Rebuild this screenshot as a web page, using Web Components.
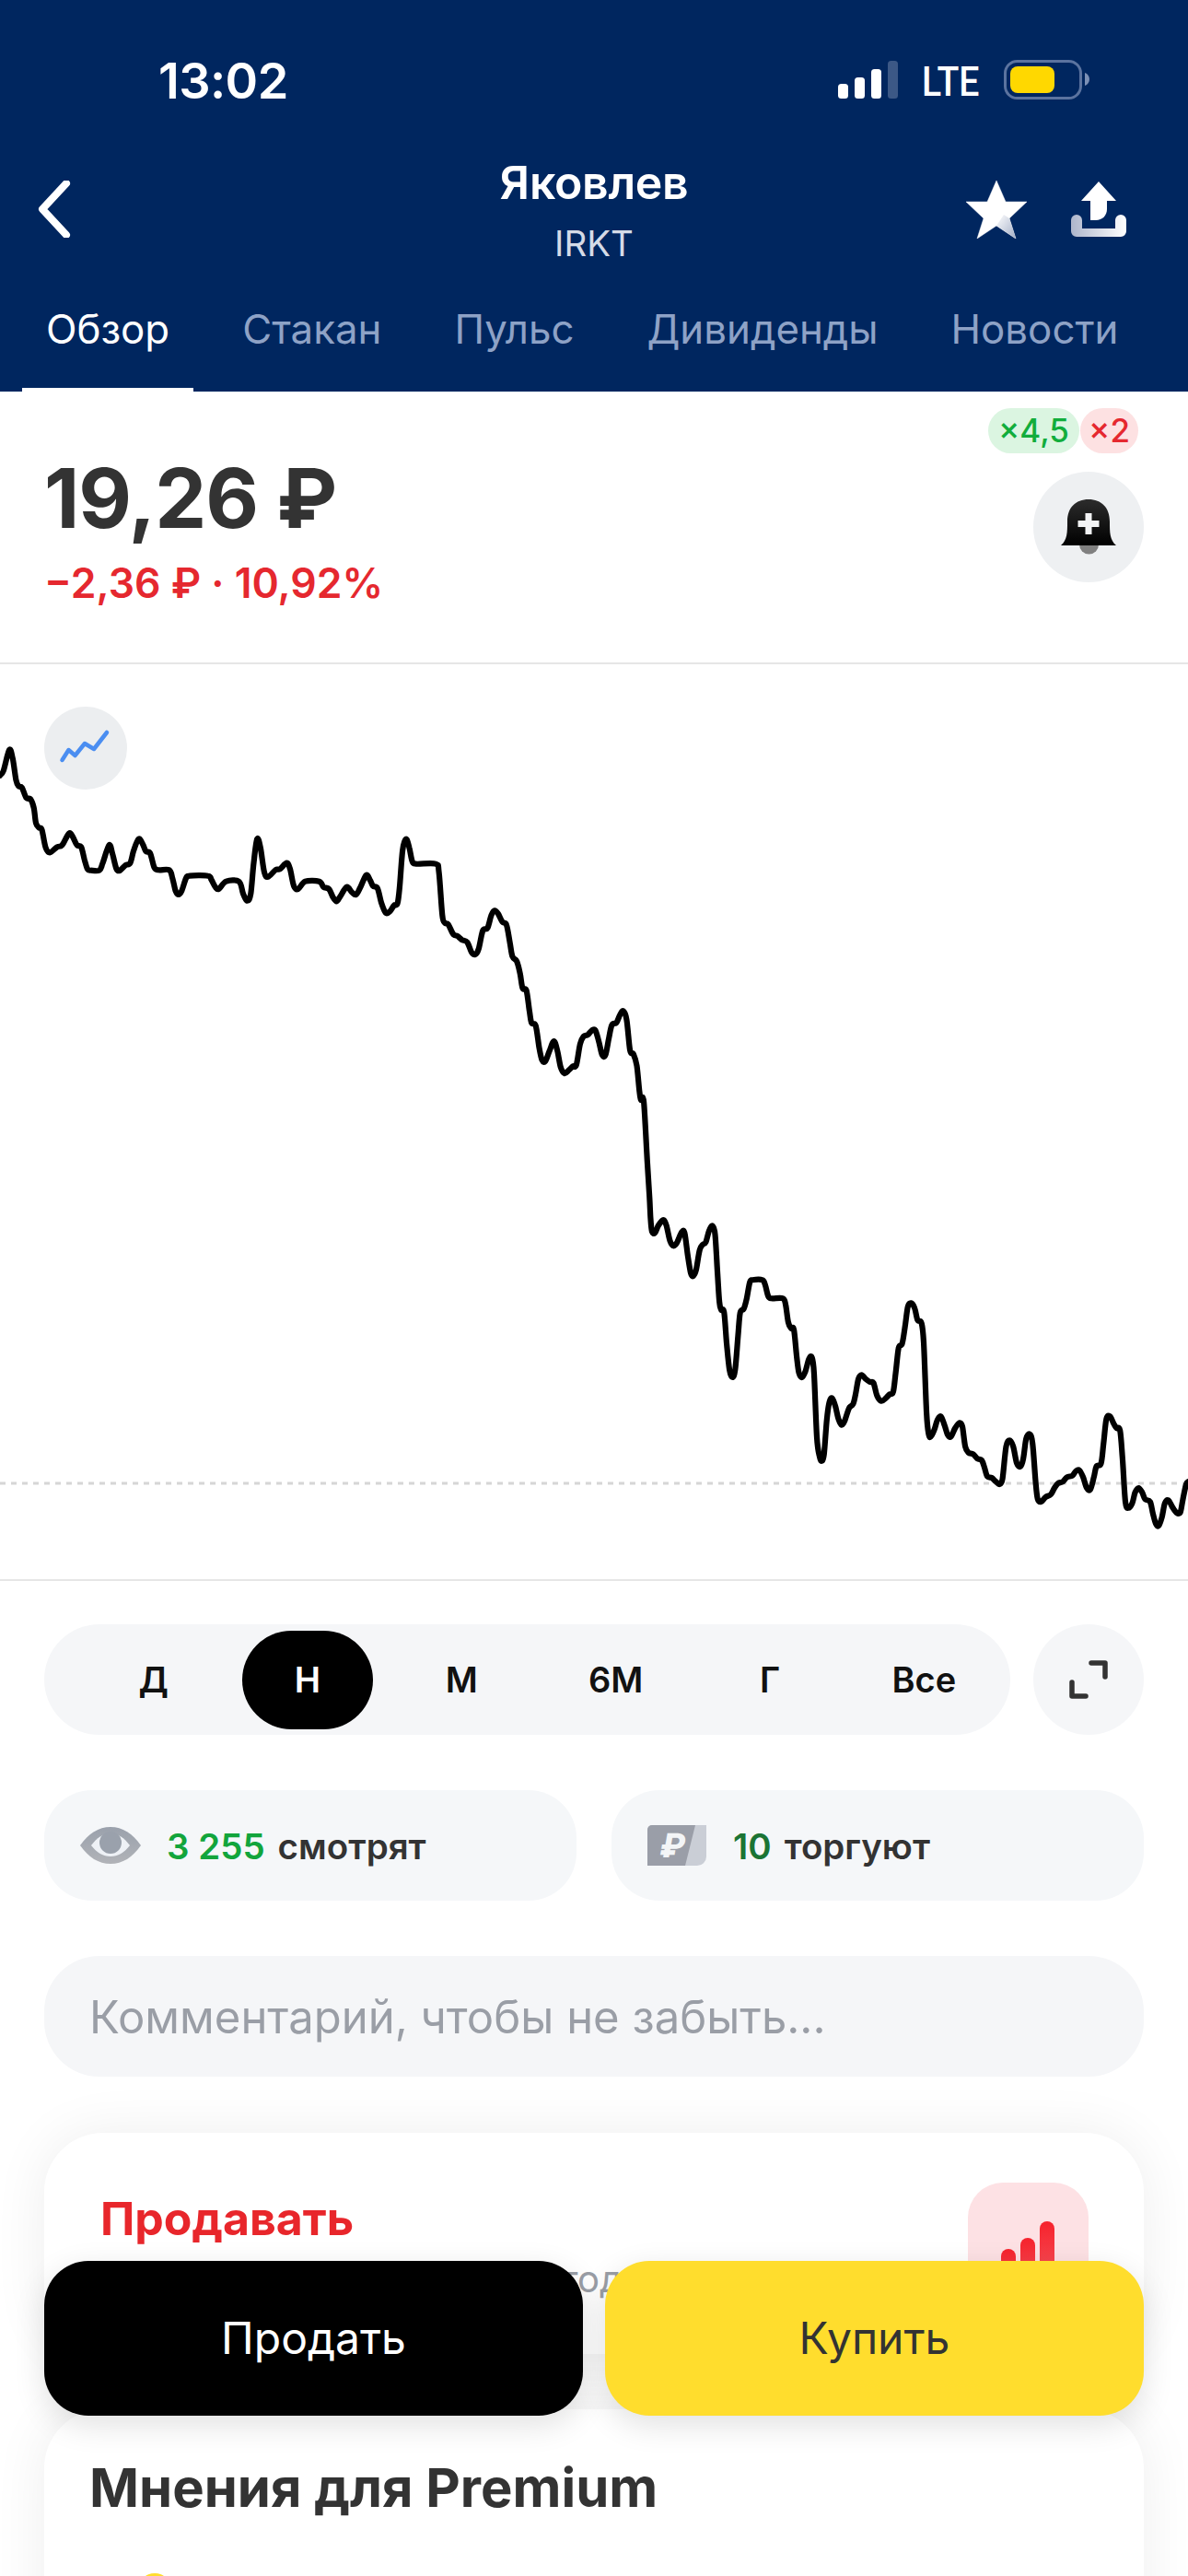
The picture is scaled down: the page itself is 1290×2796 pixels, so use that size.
<!DOCTYPE html>
<html lang="ru">
<head>
<meta charset="utf-8">
<title>Яковлев</title>
<style>
  html, body { margin: 0; padding: 0; background: #fff; }
  body { width: 1290px; height: 2796px; overflow: hidden; position: relative; font-family: Inter, "Noto Sans", sans-serif; color: #333; }
</style>
</head>
<body>
<stock-header title="Яковлев" ticker="IRKT"></stock-header>
<price-block></price-block>
<price-chart></price-chart>
<range-bar></range-bar>
<div style="display:flex;gap:38px;padding:60px 48px 0">
  <stat-pill number="3 255" label="смотрят" color="#12a53c" icon="eye"></stat-pill>
  <stat-pill number="10" label="торгуют" color="#1b7434" icon="rub"></stat-pill>
</div>
<comment-field>Комментарий, чтобы не забыть...</comment-field>
<advice-card></advice-card>
<opinions-card></opinions-card>
<trade-buttons></trade-buttons>

<script>
class StockHeader extends HTMLElement {
  constructor() {
    super();
    this.shadowDOM = this.attachShadow({ mode: 'open' });
  }

  connectedCallback() {
    this.shadowDOM.innerHTML = `
    <style>
      :host { display: block; height: 425px; background: #00265f; color: #fff; overflow: hidden; }
      .status { display: flex; align-items: center; height: 66px; padding-top: 55px; position: relative; }
      .time { margin-left: 172px; font-size: 54px; font-weight: 600; letter-spacing: -.6px; line-height: 66px; }
      .status svg { position: absolute; left: 900px; top: 55px; }
      .lte { position: absolute; left: 1001px; top: 66px; font-family: Roboto, sans-serif; font-size: 45px; line-height: 46px; font-weight: 500; transform: scaleX(.87); transform-origin: left; }
      .nav { display: flex; justify-content: space-between; align-items: center; height: 112px; margin-top: 50px; padding: 0 67px 0 41px; }
      .names { position: absolute; left: 0; right: 0; padding-top: 5px; text-align: center; }
      .names b { display: block; font-size: 50px; font-weight: 600; line-height: 56px; letter-spacing: -.3px; }
      .names span { display: block; font-size: 38.500px; line-height: 50px; margin-top: 13px; color: #d5dbe7; }
      .actions { display: flex; gap: 48px; align-items: center; }
      .tabs { display: flex; gap: 27px; margin: 44px 0 0 24px; }
      .tabs span { padding: 0 26px; height: 100px; font-size: 43.800px; line-height: 62px; color: #8ea2c6; white-space: nowrap; box-sizing: border-box; }
      .tabs .on { color: #fff; border-bottom: 6px solid #fff; }
    </style>
    <div class="status">
      <span class="time">13:02</span>
      <svg width="300" height="60" viewBox="900 55 300 60">
        <rect x="910" y="91" width="11" height="16" rx="3.5" fill="#fff"/>
        <rect x="928" y="84" width="11" height="23" rx="3.5" fill="#fff"/>
        <rect x="946" y="75" width="11" height="32" rx="3.5" fill="#fff"/>
        <rect x="964" y="66" width="11" height="41" rx="3.5" fill="#3c5886"/>
        <rect x="1091.5" y="66.5" width="82" height="40" rx="13" fill="none" stroke="#5b739f" stroke-width="3"/>
        <rect x="1097" y="72" width="48" height="29" rx="8" fill="#ffd800"/>
        <path d="M1178 79c3 1 5 4 5 7s-2 6-5 7z" fill="#7c90b5"/>
      </svg>
      <span class="lte">LTE</span>
    </div>
    <div class="nav">
      <svg width="36" height="62" viewBox="0 0 36 62"><path d="M31 3 5 31l26 28" fill="none" stroke="#fff" stroke-width="8" stroke-linecap="round" stroke-linejoin="round"/></svg>
      <div class="names"><b>${this.getAttribute('title')}</b><span>${this.getAttribute('ticker')}</span></div>
      <div class="actions">
        <svg width="66" height="63" viewBox="0 0 66 63">
          <defs><linearGradient id="st" x1="0" y1="0" x2="1" y2="1"><stop offset="0" stop-color="#fff"/><stop offset="1" stop-color="#a2adc6"/></linearGradient></defs>
          <path d="M33 0l10 23h23L47 41l7 22-21-14-21 14 7-22L0 23h23z" fill="#fff" stroke="#fff" stroke-width=".5" stroke-linejoin="round"/>
          <path d="M33 49l21 14-7-22-6-4z" fill="url(#st)"/>
        </svg>
        <svg width="60" height="60" viewBox="0 0 60 60">
          <defs><linearGradient id="tr" x1="0" y1="0" x2="1" y2="0"><stop offset="0" stop-color="#aeb6cc"/><stop offset="1" stop-color="#fff"/></linearGradient></defs>
          <path d="M30 0 49 21H39v9c0 7-5 12-12 12h-6V21H11z" fill="#fff"/>
          <path d="M0 42a6 6 0 0 1 12 0v9h36v-9a6 6 0 0 1 12 0v12a6 6 0 0 1-6 6H6a6 6 0 0 1-6-6z" fill="url(#tr)"/>
        </svg>
      </div>
    </div>
    <div class="tabs">
      <span class="on">Обзор</span><span>Стакан</span><span>Пульс</span><span>Дивиденды</span><span>Новости</span>
    </div>`;
  }
}

class PriceBlock extends HTMLElement {
  constructor() {
    super();
    this.shadowDOM = this.attachShadow({ mode: 'open' });
    this.shadowDOM.innerHTML = `
    <style>
      :host { display: flex; justify-content: space-between; height: 294px; box-sizing: content-box; border-bottom: 2px solid #e6e6e6; }
      .left { padding: 63px 0 0 48px; }
      .price { font-size: 89px; font-weight: 700; line-height: 106px; color: #333; letter-spacing: -1px; }
      .change { font-size: 44.500px; font-weight: 600; line-height: 54px; margin-top: 12px; color: #e5282f; }
      .right { display: flex; flex-direction: column; align-items: flex-end; padding: 18px 48px 0 0; }
      .badges { display: flex; margin-right: 6px; gap: 1px; }
      .badges span { height: 49px; line-height: 49px; border-radius: 25px; font-size: 35px; font-weight: 500; text-align: center; }
      .up { width: 99px; background: #dbf5e1; color: #12ad3c; }
      .down { width: 63px; background: #fde1e2; color: #e5282f; }
      .bell { width: 120px; height: 120px; border-radius: 50%; background: #eef0f2; margin-top: 20px; display: flex; align-items: center; justify-content: center; }
    </style>
    <div class="left">
      <div class="price">19,26 ₽</div>
      <div class="change">−2,36 ₽ · 10,92%</div>
    </div>
    <div class="right">
      <div class="badges"><span class="up">×4,5</span><span class="down">×2</span></div>
      <div class="bell">
        <svg width="60" height="60" viewBox="0 0 60 60">
          <defs><linearGradient id="bl" x1="0" y1="0" x2="0" y2="1"><stop offset="0" stop-color="#2c2c2c"/><stop offset="1" stop-color="#000"/></linearGradient></defs>
          <path d="M20 49h21a10.500 10.500 0 0 1-21 0z" fill="#808080"/>
          <path d="M0 50c7-6 7-14 7-26C7 9 16 0 30 0s23 9 23 24c0 12 0 20 7 26z" fill="url(#bl)"/>
          <path d="M26.500 15h7v8h8v7h-8v8h-7v-8h-8v-7h8z" fill="#f2f3f4"/>
        </svg>
      </div>
    </div>`;
  }
}

// traced from the price line, numbers are [x, y] in the crop they were read from
const CHART_A = [[0,155],[8,140],[22,72],[30,100],[38,170],[44,190],[52,195],[62,228],[72,232],[80,260],[85,310],[92,325],[99,332],[108,390],[118,406],[135,388],[147,382],[163,344],[172,355],[182,382],[192,388],[200,430],[207,460],[215,464],[235,464],[243,440],[258,382],[266,410],[275,458],[283,465],[297,447],[308,440],[316,400],[328,362],[338,380],[345,402],[355,408],[365,455],[375,463],[400,463],[408,490],[415,530],[422,543],[430,530],[440,490],[448,482],[492,482],[500,495],[510,520],[518,524],[535,500],[565,500],[575,540],[585,563],[593,540],[600,440],[608,362],[616,390],[625,470],[634,485],[652,462],[662,460],[678,440],[686,460],[695,515],[705,525],[722,500],[755,500],[765,518],[778,525],[787,550],[796,565],[805,548],[820,518],[832,535],[842,543],[852,520],[866,480],[875,495],[882,515],[893,523],[902,570],[912,602],[922,598],[932,578],[940,572],[945,520],[952,400],[960,362],[968,390],[975,435],[985,443],[1030,443],[1038,470],[1046,610],[1052,635],[1060,640],[1072,672],[1082,678],[1092,690],[1105,698],[1115,730],[1124,738],[1132,720],[1142,660],[1153,652],[1162,610],[1170,595],[1178,605],[1188,632],[1198,642],[1206,700],[1212,745],[1222,760],[1230,800],[1236,848],[1245,855],[1252,920],[1257,960],[1267,970],[1275,1040],[1282,1082],[1290,1085],[1300,1050],[1310,1020],[1318,1050],[1326,1105],[1335,1125],[1345,1115],[1355,1102],[1363,1098],[1372,1030],[1380,1005],[1390,1000],[1400,985],[1408,985],[1416,1020],[1424,1065],[1432,1065],[1440,1010],[1447,968],[1458,960],[1466,935],[1474,922],[1482,950],[1490,1050],[1498,1062],[1506,1100],[1512,1180]];
const CHART_B = [[41,-318],[49,-312],[59,-111],[65,0],[68,70],[72,110],[80,115],[90,90],[103,72],[112,90],[122,140],[132,157],[142,145],[155,112],[163,115],[172,190],[180,245],[187,255],[195,235],[205,170],[214,152],[222,145],[232,105],[241,92],[248,120],[255,250],[260,340],[265,365],[273,372],[280,470],[288,560],[296,585],[304,560],[312,450],[318,375],[328,362],[336,330],[345,275],[353,268],[380,268],[388,285],[396,320],[405,328],[437,328],[445,350],[452,405],[460,425],[468,430],[476,520],[482,570],[490,585],[500,565],[510,525],[518,520],[524,570],[532,780],[540,845],[546,857],[552,835],[560,720],[567,665],[575,653],[584,680],[592,720],[601,740],[610,725],[622,685],[633,672],[640,640],[648,590],[657,577],[668,590],[680,600],[690,603],[700,645],[712,662],[725,652],[735,640],[745,632],[752,570],[760,490],[770,475],[778,420],[786,355],[795,343],[805,360],[813,398],[824,408],[830,470],[838,700],[844,770],[850,778],[860,755],[868,725],[878,712],[888,740],[897,772],[906,778],[918,750],[930,733],[938,745],[946,810],[955,830],[968,835],[980,850],[992,855],[1000,880],[1008,908],[1020,912],[1032,925],[1042,933],[1050,915],[1060,810],[1070,790],[1080,810],[1090,865],[1100,875],[1108,850],[1116,785],[1126,770],[1134,800],[1142,920],[1148,980],[1158,990],[1170,975],[1185,966],[1195,945],[1205,930],[1218,925],[1230,910],[1245,905],[1255,890],[1265,888],[1275,910],[1285,945],[1295,950],[1305,910],[1312,875],[1325,865],[1332,800],[1340,720],[1350,712],[1360,735],[1368,750],[1378,758],[1385,850],[1393,990],[1402,1010],[1412,995],[1420,960],[1430,945],[1440,960],[1448,982],[1462,990],[1470,1030],[1478,1062],[1486,1068],[1495,1040],[1503,995],[1513,985],[1523,1005],[1535,1025],[1546,1025],[1553,985],[1562,935],[1568,925]];

function smoothPath(pts) {
  let d = `M${pts[0][0]} ${pts[0][1]}`;
  for (let i = 0; i < pts.length - 1; i++) {
    const p0 = pts[i - 1] || pts[i], p1 = pts[i], p2 = pts[i + 1], p3 = pts[i + 2] || p2;
    const c1x = p1[0] + (p2[0] - p0[0]) / 6, c1y = p1[1] + (p2[1] - p0[1]) / 6;
    const c2x = p2[0] - (p3[0] - p1[0]) / 6, c2y = p2[1] - (p3[1] - p1[1]) / 6;
    d += `C${c1x.toFixed(1)} ${c1y.toFixed(1)} ${c2x.toFixed(1)} ${c2y.toFixed(1)} ${p2[0].toFixed(1)} ${p2[1].toFixed(1)}`;
  }
  return d;
}

class PriceChart extends HTMLElement {
  constructor() {
    super();
    this.shadowDOM = this.attachShadow({ mode: 'open' });
    const left = CHART_A.map(([x, y]) => [x / 2.178, 790 + y / 3]);
    const right = CHART_B.map(([x, y]) => [680 + x / 2.57, 1300 + y / 3]);
    this.shadowDOM.innerHTML = `
    <style>
      :host { display: block; position: relative; height: 993px; border-bottom: 2px solid #e6e6e6; }
      svg.line { display: block; }
      .toggle { position: absolute; left: 48px; top: 46px; width: 90px; height: 90px; border-radius: 50%; background: #eceef0; }
    </style>
    <svg class="line" width="1290" height="993" viewBox="0 721 1290 993">
      <line x1="0" y1="1610" x2="1290" y2="1610" stroke="#d6d6d6" stroke-width="3" stroke-dasharray="6 6"/>
      <path d="${smoothPath(left.concat(right))}" fill="none" stroke="#000" stroke-width="6.200" stroke-linejoin="round" stroke-linecap="round"/>
    </svg>
    <div class="toggle">
      <svg width="90" height="90" viewBox="0 0 90 90"><path d="M19.500 58 26.500 47 33.500 53 44 40 54 46 68 28" fill="none" stroke="#4b8ef1" stroke-width="4.500" stroke-linecap="round" stroke-linejoin="round"/></svg>
    </div>`;
  }
}

class RangeBar extends HTMLElement {
  constructor() {
    super();
    this.shadowDOM = this.attachShadow({ mode: 'open' });
    const items = ['Д', 'Н', 'М', '6М', 'Г', 'Все'];
    this.shadowDOM.innerHTML = `
    <style>
      :host { display: flex; gap: 25px; padding: 47px 48px 0; }
      .bar { flex: 1; height: 120px; border-radius: 60px; background: #f5f6f8; display: grid; grid-template-columns: repeat(6, 1fr); padding: 0 10px 0 35px; align-items: center; justify-items: center; }
      .bar span { width: 142px; height: 107px; line-height: 107px; text-align: center; border-radius: 54px; font-size: 38px; font-weight: 600; color: #111; }
      .bar .on { background: #000; color: #fff; }
      .full { width: 120px; height: 120px; border-radius: 50%; background: #f5f6f8; display: flex; align-items: center; justify-content: center; }
    </style>
    <div class="bar">${items.map((t, i) => `<span class="${i === 1 ? 'on' : ''}">${t}</span>`).join('')}</div>
    <div class="full">
      <svg width="44" height="44" viewBox="0 0 44 44" fill="none" stroke="#333" stroke-width="5.500" stroke-linecap="round" stroke-linejoin="round"><path d="M25 4h15v15M4 25v15h15"/></svg>
    </div>`;
  }
}

class StatPill extends HTMLElement {
  constructor() {
    super();
    this.shadowDOM = this.attachShadow({ mode: 'open' });
  }

  connectedCallback() {
    const eye = `<svg width="66" height="40" viewBox="0 0 66 40" style="margin-left:39px;margin-right:28px">
      <defs><linearGradient id="ey" x1="0" y1="0" x2="0" y2="1"><stop offset="0" stop-color="#9aa1ac"/><stop offset="1" stop-color="#b1b3b8"/></linearGradient></defs>
      <path d="M0 20C9 7 20 0 33 0s24 7 33 20c-9 13-20 20-33 20S9 33 0 20z" fill="url(#ey)"/>
      <path d="M12 20c6-8 13-13 21-13s15 5 21 13c-6 8-13 12-21 12s-15-4-21-12z" fill="#eef1f6"/>
      <circle cx="33" cy="17" r="12" fill="#9aa1ac"/></svg>`;
    const rub = `<svg width="64" height="46" viewBox="0 0 64 46" style="margin-left:39px;margin-right:29px">
      <path d="M0 6a5 5 0 0 1 5-5h59v34a10 10 0 0 1-10 10H0z" fill="#caced6"/>
      <path d="M0 6a5 5 0 0 1 5-5h47L41 45H0z" fill="#9a9ea8"/>
      <text x="13" y="36" font-family="Inter, sans-serif" font-size="36" font-weight="800" fill="#f3f5f7" transform="skewX(-10) translate(5 0)">₽</text></svg>`;
    this.shadowDOM.innerHTML = `
    <style>
      :host { flex: 1; display: flex; align-items: center; height: 120px; border-radius: 52px; background: #f5f7f9; font-size: 38.500px; line-height: 46px; font-weight: 600; color: #333; white-space: pre; }
      svg { flex: none; }
      b, span { padding-top: 2px; }
      b { font-weight: 600; color: ${this.getAttribute('color')}; margin-right: 14px; }
    </style>
    ${this.getAttribute('icon') === 'eye' ? eye : rub}<b>${this.getAttribute('number')}</b><span>${this.getAttribute('label')}</span>`;
  }
}

class CommentField extends HTMLElement {
  constructor() {
    super();
    this.shadowDOM = this.attachShadow({ mode: 'open' });
    this.shadowDOM.innerHTML = `
    <style>
      :host { display: block; margin: 60px 48px 0; height: 131px; line-height: 133px; border-radius: 60px; background: #f5f6f8; padding-left: 49px; font-size: 49px; color: #9a9ea6; }
    </style>
    <slot></slot>`;
  }
}

class AdviceCard extends HTMLElement {
  constructor() {
    super();
    this.shadowDOM = this.attachShadow({ mode: 'open' });
    this.shadowDOM.innerHTML = `
    <style>
      :host { display: flex; justify-content: space-between; position: relative; margin: 61px 48px 0; height: 240px; border-radius: 64px; background: #fff; box-shadow: 0 0 60px rgba(0,0,0,.07); padding: 63px 60px 0 61px; box-sizing: border-box; }
      h3 { margin: 0; font-size: 50px; font-weight: 700; line-height: 60px; color: #e8262b; }
      p { margin: 14px 0 0 500px; font-size: 40px; line-height: 44px; color: #9a9ea6; }
      .score { width: 131px; height: 131px; border-radius: 38px; background: #fde1e4; position: relative; top: -9px; flex: none; }
      .score i { position: absolute; bottom: 0; width: 16px; border-radius: 8px 8px 0 0; background: linear-gradient(#f6222c, #f7636b); }
    </style>
    <div>
      <h3>Продавать</h3>
      <p>тод</p>
    </div>
    <div class="score">
      <i style="left:36px;height:56px;top:72px"></i>
      <i style="left:57px;height:68px;top:60px"></i>
      <i style="left:78px;height:86px;top:42px"></i>
    </div>`;
  }
}

class OpinionsCard extends HTMLElement {
  constructor() {
    super();
    this.shadowDOM = this.attachShadow({ mode: 'open' });
    this.shadowDOM.innerHTML = `
    <style>
      :host { display: block; margin: 60px 48px 0; height: 300px; border-radius: 64px; background: #fff; box-shadow: 0 0 60px rgba(0,0,0,.07); padding: 50px 0 0 49px; box-sizing: border-box; }
      h2 { margin: 0; font-size: 58px; font-weight: 700; line-height: 70px; color: #333; }
      .avatar { width: 36px; height: 36px; border-radius: 50%; background: #ffdd2d; margin: 58px 0 0 53px; }
    </style>
    <h2>Мнения для Premium</h2>
    <div class="avatar"></div>`;
  }
}

class TradeButtons extends HTMLElement {
  constructor() {
    super();
    this.shadowDOM = this.attachShadow({ mode: 'open' });
    this.shadowDOM.innerHTML = `
    <style>
      :host { position: absolute; left: 48px; right: 48px; top: 2454px; display: flex; gap: 24px; }
      div { flex: 1; height: 168px; line-height: 168px; text-align: center; border-radius: 48px; font-size: 48px; box-shadow: 0 10px 34px rgba(0,0,0,.12); }
      .sell { background: #000; color: #fff; }
      .buy { background: #ffdd2d; color: #333; }
    </style>
    <div class="sell">Продать</div>
    <div class="buy">Купить</div>`;
  }
}

customElements.define('stock-header', StockHeader);
customElements.define('price-block', PriceBlock);
customElements.define('price-chart', PriceChart);
customElements.define('range-bar', RangeBar);
customElements.define('stat-pill', StatPill);
customElements.define('comment-field', CommentField);
customElements.define('advice-card', AdviceCard);
customElements.define('opinions-card', OpinionsCard);
customElements.define('trade-buttons', TradeButtons);
</script>
</body>
</html>
